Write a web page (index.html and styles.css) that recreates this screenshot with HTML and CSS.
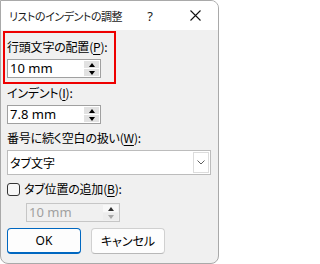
FILE: index.html
```html
<!DOCTYPE html>
<html lang="ja">
<head>
<meta charset="utf-8">
<title>リストのインデントの調整</title>
<link rel="stylesheet" href="styles.css">
</head>
<body>
<div class="window">
  <div class="titlebar">
    <span class="title">リストのインデントの調整</span>
    <span class="help">?</span>
    <span class="close"><svg class="closeicon" width="11" height="11" viewBox="0 0 11 11"><path d="M0.5 0.5L10.5 10.5M10.5 0.5L0.5 10.5" stroke="#111111" stroke-width="1.1" fill="none"/></svg></span>
  </div>
  <div class="content">
    <div class="highlight">
      <div class="label">行頭文字の配置(<u>P</u>):</div>
      <div class="spin gap4">
        <span class="value">10 mm</span>
        <span class="spinbtns"><span class="sb"><i class="up"></i></span><span class="sb"><i class="down"></i></span></span>
      </div>
    </div>
    <div class="rest">
      <div class="label first">インデント(<u>I</u>):</div>
      <div class="spin gap4">
        <span class="value">7.8 mm</span>
        <span class="spinbtns"><span class="sb"><i class="up"></i></span><span class="sb"><i class="down"></i></span></span>
      </div>
      <div class="label gap6">番号に続く空白の扱い(<u>W</u>):</div>
      <div class="select gap4">
        <span class="value">タブ文字</span>
        <span class="dropbtn"><svg width="8" height="5" viewBox="0 0 8 5"><path d="M0.5 0.5L4 4L7.5 0.5" stroke="#606060" stroke-width="1" fill="none"/></svg></span>
      </div>
      <div class="checkrow gap6">
        <span class="checkbox"></span>
        <span class="label">タブ位置の追加(<u>B</u>):</span>
      </div>
      <div class="spin disabled gap6 indent">
        <span class="value">10 mm</span>
        <span class="spinbtns"><span class="sb"><i class="up"></i></span><span class="sb"><i class="down"></i></span></span>
      </div>
      <div class="buttons gap6">
        <span class="btn primary">OK</span>
        <span class="btn">キャンセル</span>
      </div>
    </div>
  </div>
</div>
</body>
</html>
```

FILE: styles.css
```css
html, body {
  margin: 0;
  padding: 0;
}
body {
  width: 219px;
  height: 264px;
  overflow: hidden;
  background: #ffffff;
  font-family: "Noto Sans", "Noto Sans CJK JP", sans-serif;
  font-size: 12px;
  color: #000;
}
.window {
  box-sizing: border-box;
  width: 219px;
  height: 264px;
  border: 1px solid #a9a9a9;
  border-radius: 0 8px 8px 8px;
  background: #f0f0f0;
  overflow: hidden;
  display: flex;
  flex-direction: column;
}
.titlebar {
  box-sizing: border-box;
  width: 217px;
  height: 29px;
  flex: none;
  background: #ffffff;
  display: flex;
  align-items: center;
  padding-left: 8px;
}
.title {
  width: 131px;
  flex: none;
  white-space: nowrap;
  overflow: hidden;
  font-family: "Noto Sans CJK JP", sans-serif;
  font-feature-settings: "palt";
  letter-spacing: -0.45px;
  font-size: 11px;
  color: #1a1a1a;
}
.help {
  width: 20px;
  flex: none;
  text-align: center;
  font-size: 13px;
  color: #1a1a1a;
}
.close {
  width: 20px;
  flex: none;
  margin-left: 25px;
  display: flex;
  align-items: center;
  justify-content: center;
}
.closeicon {
  display: block;
}
.content {
  display: flex;
  flex-direction: column;
}
.highlight {
  box-sizing: border-box;
  width: 113px;
  margin: 1px 0 0 2px;
  border: 2px solid #ee0000;
  padding: 6px 0 4px 2px;
}
.label {
  font-family: "Noto Sans CJK JP", sans-serif;
  font-feature-settings: "palt";
  letter-spacing: -0.2px;
  line-height: 16px;
  white-space: nowrap;
}
.label u {
  text-underline-offset: 2px;
}
.rest {
  padding-left: 6px;
  display: flex;
  flex-direction: column;
}
.first { margin-top: 1px; }
.gap4 { margin-top: 4px; }
.gap6 { margin-top: 6px; }
.spin {
  box-sizing: border-box;
  width: 94px;
  height: 19px;
  border: 1px solid #a0a0a0;
  background: #fff;
  display: flex;
  align-items: center;
}
.value {
  flex: 1;
  padding-left: 2px;
  font-size: 13px;
  line-height: 17px;
  font-family: "Noto Sans", "Noto Sans CJK JP", sans-serif;
}
.spinbtns {
  width: 15px;
  height: 15px;
  padding: 1px 1px 1px 0;
  display: flex;
  flex-direction: column;
  gap: 1px;
}
.sb {
  flex: 1;
  background: #e2e2e2;
  display: flex;
  align-items: center;
  justify-content: center;
}
.up {
  width: 0;
  height: 0;
  border-left: 3px solid transparent;
  border-right: 3px solid transparent;
  border-bottom: 4px solid #000;
}
.down {
  width: 0;
  height: 0;
  border-left: 3px solid transparent;
  border-right: 3px solid transparent;
  border-top: 4px solid #000;
}
.disabled {
  background: #f0f0f0;
  border-color: #c6c6c6;
}
.disabled .value {
  color: #a0a0a0;
}
.disabled .sb {
  background: #ececec;
}
.disabled .sb:first-child {
  background: #f8f8f8;
}
.disabled .up {
  border-bottom-color: #303030;
}
.disabled .down {
  border-top-color: #a8a8a8;
}
.indent {
  margin-left: 19px;
}
.select {
  box-sizing: border-box;
  width: 204px;
  height: 25px;
  border: 1px solid #bcbcbc;
  background: #fff;
  display: flex;
  align-items: center;
}
.select .value {
  font-family: "Noto Sans CJK JP", sans-serif;
  font-feature-settings: "palt";
  font-size: 12px;
}
.dropbtn {
  box-sizing: border-box;
  width: 16px;
  height: 21px;
  margin-right: 1px;
  border: 1px solid #dcdcdc;
  display: flex;
  align-items: center;
  justify-content: center;
}
.checkrow {
  display: flex;
  align-items: center;
  height: 16px;
}
.checkbox {
  box-sizing: border-box;
  width: 13px;
  height: 13px;
  border: 1px solid #333;
  border-radius: 3px;
  background: #f7f7f7;
  margin-right: 4px;
}
.buttons {
  display: flex;
  gap: 10px;
}
.btn {
  box-sizing: border-box;
  width: 74px;
  height: 26px;
  border: 1px solid #d0d0d0;
  border-bottom-color: #b8b8b8;
  border-radius: 4px;
  background: #fdfdfd;
  display: flex;
  align-items: center;
  justify-content: center;
  font-family: "Noto Sans", "Noto Sans CJK JP", sans-serif;
  font-feature-settings: "palt";
  font-size: 12px;
}
.primary {
  border: 1px solid #0067c0;
  border-bottom-width: 2px;
}
```
